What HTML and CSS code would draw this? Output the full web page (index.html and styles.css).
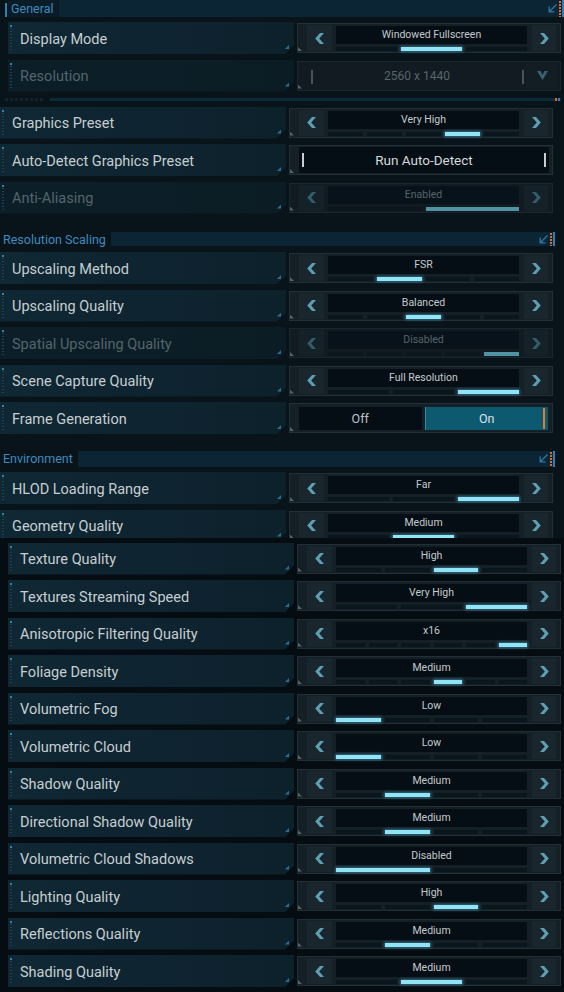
FILE: index.html
```html
<!DOCTYPE html>
<html>
<head>
<meta charset="utf-8">
<link rel="stylesheet" href="styles.css">
</head>
<body>
<div class="page">

  <div class="indent">
    <div class="sec-head general">
      <span class="sec-title">General</span>
      <div class="sec-bar">
        <svg class="sec-ico" width="9" height="9" viewBox="0 0 9 9"><path d="M8.5 0.5 L1.8 7.2 M1.2 2.5 V7.8 H6.5" stroke="#2f77a3" stroke-width="1.3" fill="none"/></svg>
        <i class="sec-orange"></i><i class="sec-blue"></i>
      </div>
    </div>

    <div class="row r-first">
      <div class="label">Display Mode</div>
      <div class="ctrl sel">
        <div class="arrow"><svg width="9" height="11" viewBox="0 0 9 11"><polygon points="5,0 9,0 4.2,5.5 9,11 5,11 0.2,5.5"/></svg></div>
        <div class="mid"><div class="val">Windowed Fullscreen</div><div class="segs"><i></i><i class="on"></i><i></i></div></div>
        <div class="arrow"><svg width="9" height="11" viewBox="0 0 9 11"><polygon points="4,0 0,0 4.8,5.5 0,11 4,11 8.8,5.5"/></svg></div>
      </div>
    </div>

    <div class="row dis">
      <div class="label">Resolution</div>
      <div class="ctrl drop">
        <div class="drop-field">2560 x 1440</div>
        <div class="drop-btn"><svg width="11" height="9" viewBox="0 0 11 9"><polygon points="0,0 3.6,0 5.5,4 7.4,0 11,0 5.5,9"/></svg></div>
      </div>
    </div>

    <div class="hscroll"><div class="hs-dots"></div><div class="hs-track"><i class="hs-orange"></i><i class="hs-blue"></i></div></div>
  </div>

  <div class="row r-gp">
    <div class="label">Graphics Preset</div>
    <div class="ctrl sel">
      <div class="arrow"><svg width="9" height="11" viewBox="0 0 9 11"><polygon points="5,0 9,0 4.2,5.5 9,11 5,11 0.2,5.5"/></svg></div>
      <div class="mid"><div class="val">Very High</div><div class="segs"><i></i><i></i><i></i><i class="on"></i><i></i></div></div>
      <div class="arrow"><svg width="9" height="11" viewBox="0 0 9 11"><polygon points="4,0 0,0 4.8,5.5 0,11 4,11 8.8,5.5"/></svg></div>
    </div>
  </div>

  <div class="row">
    <div class="label">Auto-Detect Graphics Preset</div>
    <div class="ctrl btn">
      <div class="btn-field">Run Auto-Detect</div>
    </div>
  </div>

  <div class="row dis">
    <div class="label">Anti-Aliasing</div>
    <div class="ctrl sel">
      <div class="arrow"><svg width="9" height="11" viewBox="0 0 9 11"><polygon points="5,0 9,0 4.2,5.5 9,11 5,11 0.2,5.5"/></svg></div>
      <div class="mid"><div class="val">Enabled</div><div class="segs"><i></i><i class="on"></i></div></div>
      <div class="arrow"><svg width="9" height="11" viewBox="0 0 9 11"><polygon points="4,0 0,0 4.8,5.5 0,11 4,11 8.8,5.5"/></svg></div>
    </div>
  </div>

  <div class="sec-head rs">
    <span class="sec-title">Resolution Scaling</span>
    <div class="sec-bar">
      <svg class="sec-ico" width="9" height="9" viewBox="0 0 9 9"><path d="M8.5 0.5 L1.8 7.2 M1.2 2.5 V7.8 H6.5" stroke="#2f77a3" stroke-width="1.3" fill="none"/></svg>
      <i class="sec-orange"></i><i class="sec-blue"></i>
    </div>
  </div>

  <div class="row r-sec">
    <div class="label">Upscaling Method</div>
    <div class="ctrl sel">
      <div class="arrow"><svg width="9" height="11" viewBox="0 0 9 11"><polygon points="5,0 9,0 4.2,5.5 9,11 5,11 0.2,5.5"/></svg></div>
      <div class="mid"><div class="val">FSR</div><div class="segs"><i></i><i class="on"></i><i></i><i></i></div></div>
      <div class="arrow"><svg width="9" height="11" viewBox="0 0 9 11"><polygon points="4,0 0,0 4.8,5.5 0,11 4,11 8.8,5.5"/></svg></div>
    </div>
  </div>

  <div class="row">
    <div class="label">Upscaling Quality</div>
    <div class="ctrl sel">
      <div class="arrow"><svg width="9" height="11" viewBox="0 0 9 11"><polygon points="5,0 9,0 4.2,5.5 9,11 5,11 0.2,5.5"/></svg></div>
      <div class="mid"><div class="val">Balanced</div><div class="segs"><i></i><i></i><i class="on"></i><i></i><i></i></div></div>
      <div class="arrow"><svg width="9" height="11" viewBox="0 0 9 11"><polygon points="4,0 0,0 4.8,5.5 0,11 4,11 8.8,5.5"/></svg></div>
    </div>
  </div>

  <div class="row dis">
    <div class="label">Spatial Upscaling Quality</div>
    <div class="ctrl sel">
      <div class="arrow"><svg width="9" height="11" viewBox="0 0 9 11"><polygon points="5,0 9,0 4.2,5.5 9,11 5,11 0.2,5.5"/></svg></div>
      <div class="mid"><div class="val">Disabled</div><div class="segs"><i></i><i></i><i></i><i></i><i class="on"></i></div></div>
      <div class="arrow"><svg width="9" height="11" viewBox="0 0 9 11"><polygon points="4,0 0,0 4.8,5.5 0,11 4,11 8.8,5.5"/></svg></div>
    </div>
  </div>

  <div class="row">
    <div class="label">Scene Capture Quality</div>
    <div class="ctrl sel">
      <div class="arrow"><svg width="9" height="11" viewBox="0 0 9 11"><polygon points="5,0 9,0 4.2,5.5 9,11 5,11 0.2,5.5"/></svg></div>
      <div class="mid"><div class="val">Full Resolution</div><div class="segs"><i></i><i></i><i class="on"></i></div></div>
      <div class="arrow"><svg width="9" height="11" viewBox="0 0 9 11"><polygon points="4,0 0,0 4.8,5.5 0,11 4,11 8.8,5.5"/></svg></div>
    </div>
  </div>

  <div class="row">
    <div class="label">Frame Generation</div>
    <div class="ctrl toggle">
      <div class="tg-off">Off</div>
      <div class="tg-on">On</div>
    </div>
  </div>

  <div class="sec-head env">
    <span class="sec-title">Environment</span>
    <div class="sec-bar">
      <svg class="sec-ico" width="9" height="9" viewBox="0 0 9 9"><path d="M8.5 0.5 L1.8 7.2 M1.2 2.5 V7.8 H6.5" stroke="#2f77a3" stroke-width="1.3" fill="none"/></svg>
      <i class="sec-orange"></i><i class="sec-blue"></i>
    </div>
  </div>

  <div class="row r-sec2">
    <div class="label">HLOD Loading Range</div>
    <div class="ctrl sel">
      <div class="arrow"><svg width="9" height="11" viewBox="0 0 9 11"><polygon points="5,0 9,0 4.2,5.5 9,11 5,11 0.2,5.5"/></svg></div>
      <div class="mid"><div class="val">Far</div><div class="segs"><i></i><i></i><i class="on"></i></div></div>
      <div class="arrow"><svg width="9" height="11" viewBox="0 0 9 11"><polygon points="4,0 0,0 4.8,5.5 0,11 4,11 8.8,5.5"/></svg></div>
    </div>
  </div>

  <div class="clip">
    <div class="row r-clip">
      <div class="label">Geometry Quality</div>
      <div class="ctrl sel">
        <div class="arrow"><svg width="9" height="11" viewBox="0 0 9 11"><polygon points="5,0 9,0 4.2,5.5 9,11 5,11 0.2,5.5"/></svg></div>
        <div class="mid"><div class="val">Medium</div><div class="segs"><i></i><i class="on"></i><i></i></div></div>
        <div class="arrow"><svg width="9" height="11" viewBox="0 0 9 11"><polygon points="4,0 0,0 4.8,5.5 0,11 4,11 8.8,5.5"/></svg></div>
      </div>
    </div>
  </div>

  <div class="sublist">
    <div class="indent">
      <div class="row r-subfirst">
        <div class="label">Texture Quality</div>
        <div class="ctrl sel">
          <div class="arrow"><svg width="9" height="11" viewBox="0 0 9 11"><polygon points="5,0 9,0 4.2,5.5 9,11 5,11 0.2,5.5"/></svg></div>
          <div class="mid"><div class="val">High</div><div class="segs"><i></i><i></i><i class="on"></i><i></i></div></div>
          <div class="arrow"><svg width="9" height="11" viewBox="0 0 9 11"><polygon points="4,0 0,0 4.8,5.5 0,11 4,11 8.8,5.5"/></svg></div>
        </div>
      </div>

      <div class="row">
        <div class="label">Textures Streaming Speed</div>
        <div class="ctrl sel">
          <div class="arrow"><svg width="9" height="11" viewBox="0 0 9 11"><polygon points="5,0 9,0 4.2,5.5 9,11 5,11 0.2,5.5"/></svg></div>
          <div class="mid"><div class="val">Very High</div><div class="segs"><i></i><i></i><i class="on"></i></div></div>
          <div class="arrow"><svg width="9" height="11" viewBox="0 0 9 11"><polygon points="4,0 0,0 4.8,5.5 0,11 4,11 8.8,5.5"/></svg></div>
        </div>
      </div>

      <div class="row">
        <div class="label">Anisotropic Filtering Quality</div>
        <div class="ctrl sel">
          <div class="arrow"><svg width="9" height="11" viewBox="0 0 9 11"><polygon points="5,0 9,0 4.2,5.5 9,11 5,11 0.2,5.5"/></svg></div>
          <div class="mid"><div class="val">x16</div><div class="segs"><i></i><i></i><i></i><i></i><i></i><i class="on"></i></div></div>
          <div class="arrow"><svg width="9" height="11" viewBox="0 0 9 11"><polygon points="4,0 0,0 4.8,5.5 0,11 4,11 8.8,5.5"/></svg></div>
        </div>
      </div>

      <div class="row">
        <div class="label">Foliage Density</div>
        <div class="ctrl sel">
          <div class="arrow"><svg width="9" height="11" viewBox="0 0 9 11"><polygon points="5,0 9,0 4.2,5.5 9,11 5,11 0.2,5.5"/></svg></div>
          <div class="mid"><div class="val">Medium</div><div class="segs"><i></i><i></i><i></i><i class="on"></i><i></i><i></i></div></div>
          <div class="arrow"><svg width="9" height="11" viewBox="0 0 9 11"><polygon points="4,0 0,0 4.8,5.5 0,11 4,11 8.8,5.5"/></svg></div>
        </div>
      </div>

      <div class="row">
        <div class="label">Volumetric Fog</div>
        <div class="ctrl sel">
          <div class="arrow"><svg width="9" height="11" viewBox="0 0 9 11"><polygon points="5,0 9,0 4.2,5.5 9,11 5,11 0.2,5.5"/></svg></div>
          <div class="mid"><div class="val">Low</div><div class="segs"><i class="on"></i><i></i><i></i><i></i></div></div>
          <div class="arrow"><svg width="9" height="11" viewBox="0 0 9 11"><polygon points="4,0 0,0 4.8,5.5 0,11 4,11 8.8,5.5"/></svg></div>
        </div>
      </div>

      <div class="row">
        <div class="label">Volumetric Cloud</div>
        <div class="ctrl sel">
          <div class="arrow"><svg width="9" height="11" viewBox="0 0 9 11"><polygon points="5,0 9,0 4.2,5.5 9,11 5,11 0.2,5.5"/></svg></div>
          <div class="mid"><div class="val">Low</div><div class="segs"><i class="on"></i><i></i><i></i><i></i></div></div>
          <div class="arrow"><svg width="9" height="11" viewBox="0 0 9 11"><polygon points="4,0 0,0 4.8,5.5 0,11 4,11 8.8,5.5"/></svg></div>
        </div>
      </div>

      <div class="row">
        <div class="label">Shadow Quality</div>
        <div class="ctrl sel">
          <div class="arrow"><svg width="9" height="11" viewBox="0 0 9 11"><polygon points="5,0 9,0 4.2,5.5 9,11 5,11 0.2,5.5"/></svg></div>
          <div class="mid"><div class="val">Medium</div><div class="segs"><i></i><i class="on"></i><i></i><i></i></div></div>
          <div class="arrow"><svg width="9" height="11" viewBox="0 0 9 11"><polygon points="4,0 0,0 4.8,5.5 0,11 4,11 8.8,5.5"/></svg></div>
        </div>
      </div>

      <div class="row">
        <div class="label">Directional Shadow Quality</div>
        <div class="ctrl sel">
          <div class="arrow"><svg width="9" height="11" viewBox="0 0 9 11"><polygon points="5,0 9,0 4.2,5.5 9,11 5,11 0.2,5.5"/></svg></div>
          <div class="mid"><div class="val">Medium</div><div class="segs"><i></i><i class="on"></i><i></i><i></i></div></div>
          <div class="arrow"><svg width="9" height="11" viewBox="0 0 9 11"><polygon points="4,0 0,0 4.8,5.5 0,11 4,11 8.8,5.5"/></svg></div>
        </div>
      </div>

      <div class="row">
        <div class="label">Volumetric Cloud Shadows</div>
        <div class="ctrl sel">
          <div class="arrow"><svg width="9" height="11" viewBox="0 0 9 11"><polygon points="5,0 9,0 4.2,5.5 9,11 5,11 0.2,5.5"/></svg></div>
          <div class="mid"><div class="val">Disabled</div><div class="segs"><i class="on"></i><i></i></div></div>
          <div class="arrow"><svg width="9" height="11" viewBox="0 0 9 11"><polygon points="4,0 0,0 4.8,5.5 0,11 4,11 8.8,5.5"/></svg></div>
        </div>
      </div>

      <div class="row">
        <div class="label">Lighting Quality</div>
        <div class="ctrl sel">
          <div class="arrow"><svg width="9" height="11" viewBox="0 0 9 11"><polygon points="5,0 9,0 4.2,5.5 9,11 5,11 0.2,5.5"/></svg></div>
          <div class="mid"><div class="val">High</div><div class="segs"><i></i><i></i><i class="on"></i><i></i></div></div>
          <div class="arrow"><svg width="9" height="11" viewBox="0 0 9 11"><polygon points="4,0 0,0 4.8,5.5 0,11 4,11 8.8,5.5"/></svg></div>
        </div>
      </div>

      <div class="row">
        <div class="label">Reflections Quality</div>
        <div class="ctrl sel">
          <div class="arrow"><svg width="9" height="11" viewBox="0 0 9 11"><polygon points="5,0 9,0 4.2,5.5 9,11 5,11 0.2,5.5"/></svg></div>
          <div class="mid"><div class="val">Medium</div><div class="segs"><i></i><i class="on"></i><i></i><i></i></div></div>
          <div class="arrow"><svg width="9" height="11" viewBox="0 0 9 11"><polygon points="4,0 0,0 4.8,5.5 0,11 4,11 8.8,5.5"/></svg></div>
        </div>
      </div>

      <div class="row">
        <div class="label">Shading Quality</div>
        <div class="ctrl sel">
          <div class="arrow"><svg width="9" height="11" viewBox="0 0 9 11"><polygon points="5,0 9,0 4.2,5.5 9,11 5,11 0.2,5.5"/></svg></div>
          <div class="mid"><div class="val">Medium</div><div class="segs"><i></i><i class="on"></i><i></i></div></div>
          <div class="arrow"><svg width="9" height="11" viewBox="0 0 9 11"><polygon points="4,0 0,0 4.8,5.5 0,11 4,11 8.8,5.5"/></svg></div>
        </div>
      </div>
    </div>
  </div>

</div>
</body>
</html>
```
FILE: styles.css
```css
html, body {
  margin: 0;
  padding: 0;
}
body {
  background: #08131a;
  width: 564px;
  height: 992px;
  overflow: hidden;
  font-family: Roboto, "Liberation Sans", sans-serif;
}
.page {
  display: flex;
  flex-direction: column;
}
.indent {
  margin-left: 8px;
  display: flex;
  flex-direction: column;
}

/* Section headers */
.sec-head {
  display: flex;
  height: 16px;
  margin-right: -2px;
  width: 555px;
}
.sec-head.general {
  height: 17px;
  width: 556px;
  position: relative;
}
.sec-head.general::before {
  content: "";
  position: absolute;
  left: -3px;
  top: 3px;
  width: 2px;
  height: 14px;
  background: #2f7fb5;
}
.sec-head.general .sec-title {
  background: #0a1c27;
  padding-left: 3px;
}
.sec-head.rs {
  margin-top: 18.5px;
  height: 14px;
}
.sec-head.env {
  margin-top: 16.5px;
}
.sec-title {
  color: #3f8bbf;
  font-size: 12.5px;
  padding: 0 5px 0 3px;
  display: flex;
  align-items: center;
  white-space: nowrap;
}
.sec-bar {
  flex: 1;
  background: #0c2535;
  display: flex;
  align-items: center;
  justify-content: flex-end;
}
.sec-ico {
  margin-right: 1px;
}
.sec-orange {
  width: 2px;
  align-self: stretch;
  margin: 1px 1px 0 1px;
  background: repeating-linear-gradient(to bottom, #e06a26 0 2px, transparent 2px 3px);
}
.sec-blue {
  width: 2px;
  align-self: stretch;
  background: #2d7fb5;
}

/* Rows */
.row {
  display: flex;
  width: 553px;
  height: 32px;
  margin-top: 5.5px;
  flex-shrink: 0;
}
.row.r-first { margin-top: 5px; }
.row.r-gp { margin-top: 6px; }
.row.r-sec { margin-top: 6px; }
.row.r-sec2 { margin-top: 5.5px; }
.row.r-clip { margin-top: 0; }
.row.r-subfirst { margin-top: 0; }

.clip {
  height: 28.5px;
  margin-top: 5.5px;
  overflow: hidden;
  flex-shrink: 0;
}
.sublist {
  background: #050d12;
  padding-top: 4.5px;
  padding-bottom: 10px;
}

/* Label panel */
.label {
  position: relative;
  width: 286px;
  height: 32px;
  box-sizing: border-box;
  padding-left: 12px;
  padding-top: 2px;
  display: flex;
  align-items: center;
  font-size: 14.5px;
  color: #c7ced1;
  white-space: nowrap;
  background: linear-gradient(90deg, #0f2834 0%, #0e2430 55%, #0d212b 100%);
  clip-path: polygon(0 0, 100% 0, 100% calc(100% - 9px), calc(100% - 9px) 100%, 0 100%);
}
.label::before {
  content: "";
  position: absolute;
  left: 2px;
  top: 3px;
  bottom: 4px;
  width: 2px;
  background:
    linear-gradient(#2c86aa, #2c86aa) top / 2px 2px no-repeat,
    repeating-linear-gradient(to bottom, #1c4658 0 1px, transparent 1px 3px);
}
.label::after {
  content: "";
  position: absolute;
  right: 5px;
  bottom: 5px;
  width: 4px;
  height: 4px;
  background: #2a6f93;
  clip-path: polygon(100% 0, 100% 100%, 0 100%);
}
.row.dis .label {
  color: #56646a;
  background: linear-gradient(90deg, #0c1f29 0%, #0b1c24 100%);
}

/* Controls */
.ctrl {
  position: relative;
  width: 264px;
  height: 30px;
  margin-top: 1px;
  margin-left: 3px;
  box-sizing: border-box;
  background: #141f26;
  border: 1px solid #212f37;
  flex-shrink: 0;
}
.ctrl::before {
  content: "";
  position: absolute;
  left: 0;
  bottom: 1px;
  width: 4px;
  height: 4px;
  background: #55636a;
  clip-path: polygon(0 0, 100% 100%, 0 100%);
}
.ctrl.sel {
  display: grid;
  grid-template-columns: 25px 1fr 24px;
  column-gap: 4px;
  padding: 1px 4px 1px 9px;
}
.arrow {
  background: #19262e;
  display: flex;
  align-items: center;
  justify-content: center;
}
.arrow svg {
  fill: #5e9fb2;
}
.mid {
  display: flex;
  flex-direction: column;
  padding-top: 1px;
  margin-right: 1px;
}
.val {
  height: 18px;
  background: #050e14;
  color: #c3cacd;
  font-size: 10.5px;
  line-height: 17px;
  text-align: center;
  white-space: nowrap;
}
.segs {
  display: flex;
  gap: 4px;
  height: 4px;
  margin-top: 3px;
}
.segs i {
  flex: 1;
  background: #0a161d;
}
.segs i.on {
  background: #90e4f8;
  box-shadow: 0 0 3px 1px rgba(95, 205, 240, 0.45);
}

.row.dis .ctrl {
  background: #111b21;
  border-color: #1a272e;
}
.row.dis .arrow {
  background: #152128;
}
.row.dis .arrow svg {
  fill: #335b69;
}
.row.dis .val {
  color: #57646a;
  background: #08121a;
}
.row.dis .segs i {
  background: #0c171d;
}
.row.dis .segs i.on {
  background: #4f93a5;
  box-shadow: none;
}

/* Dropdown (Resolution) */
.ctrl.drop {
  display: flex;
  background: #0e1a20;
  border-color: #16232a;
  padding: 1px 1px 1px 0;
}
.drop-field {
  flex: 1;
  position: relative;
  color: #58656b;
  font-size: 12px;
  display: flex;
  align-items: center;
  justify-content: center;
  padding-left: 10px;
  padding-top: 1px;
}
.drop-field::before,
.drop-field::after {
  content: "";
  position: absolute;
  top: 7px;
  width: 2px;
  height: 14px;
  background: #485459;
}
.drop-field::before { left: 13px; }
.drop-field::after { right: 2px; }
.drop-btn {
  width: 33px;
  background: #121e24;
  display: flex;
  align-items: center;
  justify-content: center;
}
.drop-btn svg {
  fill: #3b6272;
}

/* Button */
.ctrl.btn {
  padding: 1px 3px 1px 9px;
  display: flex;
}
.btn-field {
  flex: 1;
  position: relative;
  background: #050e14;
  color: #d2d8db;
  font-size: 13.5px;
  display: flex;
  align-items: center;
  justify-content: center;
}
.btn-field::before,
.btn-field::after {
  content: "";
  position: absolute;
  top: 6px;
  width: 2px;
  height: 14px;
  background: #c7cfd3;
}
.btn-field::before { left: 3px; }
.btn-field::after { right: 3px; }

/* Toggle */
.ctrl.toggle {
  display: flex;
  gap: 3px;
  padding: 3px 4px 2px 9px;
}
.tg-off,
.tg-on {
  flex: 1;
  display: flex;
  align-items: center;
  justify-content: center;
  font-size: 12.5px;
  position: relative;
}
.tg-off {
  background: #050e14;
  color: #b9c3c7;
}
.tg-on {
  background: #0d5a70;
  border-left: 1px solid #2a8fae;
  color: #d5e3e8;
}
.tg-on::after {
  content: "";
  position: absolute;
  right: 3px;
  top: 1px;
  bottom: 1px;
  width: 2.5px;
  background: #e27a30;
}

/* Horizontal scroll line */
.hscroll {
  display: flex;
  height: 3px;
  margin-top: 6px;
  margin-left: -3px;
  width: 556px;
}
.hs-dots {
  width: 40px;
  background: repeating-linear-gradient(to right, #102430 0 3px, transparent 3px 5px);
}
.hs-track {
  flex: 1;
  margin-left: 5px;
  background: #0d2a3b;
  display: flex;
  justify-content: flex-end;
}
.hs-orange {
  width: 2px;
  background: #d8672b;
  margin-right: 1px;
}
.hs-blue {
  width: 2px;
  background: #2d7fb5;
  margin-right: 1px;
}
```
